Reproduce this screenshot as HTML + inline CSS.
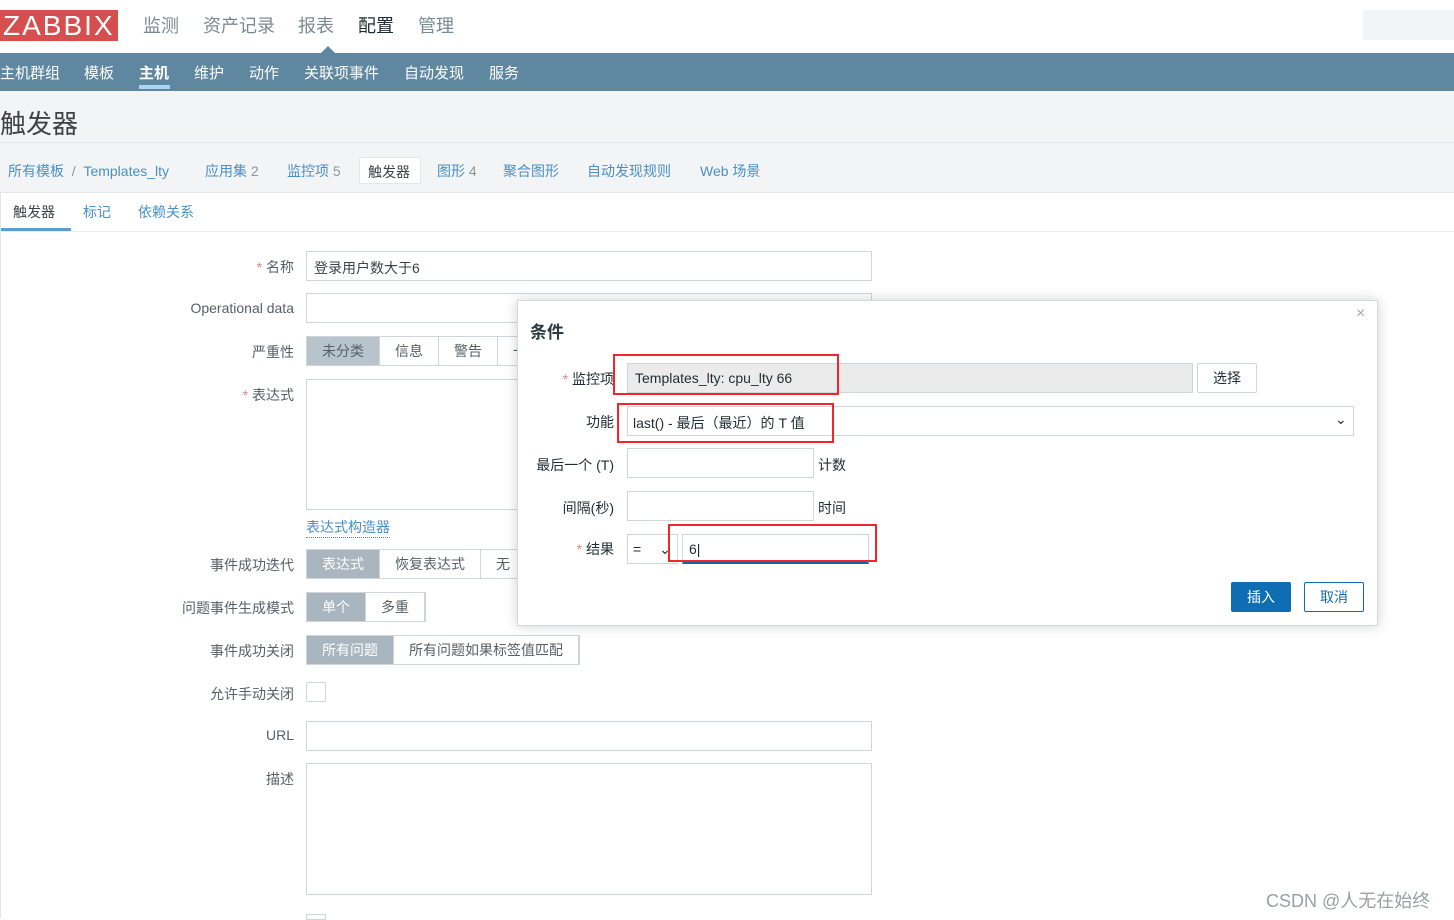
<!DOCTYPE html>
<html><head><meta charset="utf-8"><style>
*{box-sizing:border-box;margin:0;padding:0}
body{width:1454px;height:918px;overflow:hidden;background:#fff;font-family:"Liberation Sans","Noto Sans CJK SC",sans-serif;font-size:14px;color:#1f2c33;position:relative}
.a{position:absolute;white-space:nowrap}
.top{top:0;left:0;width:1454px;height:53px;background:#fff}
.logo{left:0;top:10px;width:118px;height:31px;background:#d64e4e;color:#fff;font-size:28px;line-height:31px;padding-left:3px;letter-spacing:2px}
.mm{top:12px;font-size:18px;color:#7a8a94}
.nav{top:53px;left:0;width:1454px;height:38px;background:#5f879f}
.sm{top:62px;font-size:15px;color:#fff}
.hd{top:91px;left:0;width:1454px;height:102px;background:#f3f4f6;border-bottom:1px solid #e4e7ea}
.lnk{color:#4a90c6;font-size:14px}
.lbl{font-size:14px;color:#576068;text-align:right;right:1160px}
.in{border:1px solid #cfd5d9;background:#fff}
.seg{border:1px solid #cfd5d9;height:30px;display:flex;font-size:14px;color:#576068}
.seg span{padding:0 15px;line-height:28px;border-right:1px solid #cfd5d9}
.seg span.on{background:#a9b6bf;color:#fff}
.st{color:#e8857a}
.red{border:2px solid #f0262a}
</style></head><body>
<div class="a top"></div>
<div class="a logo">ZABBIX</div>
<div class="a mm" style="left:143px">监测</div>
<div class="a mm" style="left:203px">资产记录</div>
<div class="a mm" style="left:298px">报表</div>
<div class="a mm" style="left:358px;color:#1f2c33">配置</div>
<div class="a mm" style="left:418px">管理</div>
<div class="a" style="left:1363px;top:10px;width:91px;height:30px;background:#f3f4f6"></div>
<div class="a nav"></div>
<div class="a" style="left:320px;top:46px;width:0;height:0;border-left:8px solid transparent;border-right:8px solid transparent;border-bottom:8px solid #5f879f"></div>
<div class="a sm" style="left:0">主机群组</div>
<div class="a sm" style="left:84px">模板</div>
<div class="a sm" style="left:139px;font-weight:bold">主机</div>
<div class="a" style="left:139px;top:85px;width:31px;height:4px;background:#a8d5f3"></div>
<div class="a sm" style="left:194px">维护</div>
<div class="a sm" style="left:249px">动作</div>
<div class="a sm" style="left:304px">关联项事件</div>
<div class="a sm" style="left:404px">自动发现</div>
<div class="a sm" style="left:489px">服务</div>
<div class="a hd"></div>
<div class="a" style="left:0;top:104px;font-size:26px;color:#3d4347">触发器</div>
<div class="a" style="left:0;top:142px;width:1454px;height:1px;background:#e4e7ea"></div>
<div class="a lnk" style="left:8px;top:161px">所有模板 <span style="color:#8896a0">&nbsp;/&nbsp;</span> Templates_lty</div>
<div class="a lnk" style="left:205px;top:161px">应用集 <span style="color:#8896a0">2</span></div>
<div class="a lnk" style="left:287px;top:161px">监控项 <span style="color:#8896a0">5</span></div>
<div class="a" style="left:359px;top:157px;width:62px;height:27px;background:#fff;border:1px solid #e4e7ea;border-radius:2px;padding:4px 8px;color:#3d4347">触发器</div>
<div class="a lnk" style="left:437px;top:161px">图形 <span style="color:#8896a0">4</span></div>
<div class="a lnk" style="left:503px;top:161px">聚合图形</div>
<div class="a lnk" style="left:587px;top:161px">自动发现规则</div>
<div class="a lnk" style="left:700px;top:161px">Web 场景</div>
<div class="a" style="left:0;top:193px;width:1454px;height:725px;background:#fff;border-left:1px solid #e4e7ea"></div>
<div class="a" style="left:13px;top:202px;color:#3d4347">触发器</div>
<div class="a lnk" style="left:83px;top:202px">标记</div>
<div class="a lnk" style="left:138px;top:202px">依赖关系</div>
<div class="a" style="left:1px;top:228px;width:70px;height:3px;background:#5b9fd0"></div>
<div class="a" style="left:0;top:231px;width:1454px;height:1px;background:#e9ecee"></div>

<div class="a lbl" style="top:257px"><span class="st">*</span> 名称</div>
<div class="a in" style="left:306px;top:251px;width:566px;height:30px;padding:6px 7px;color:#3d4347">登录用户数大于6</div>
<div class="a lbl" style="top:300px">Operational data</div>
<div class="a in" style="left:306px;top:293px;width:566px;height:30px"></div>
<div class="a lbl" style="top:342px">严重性</div>
<div class="a seg" style="left:306px;top:336px"><span class="on" style="background:#b8c4cb;color:#576068">未分类</span><span>信息</span><span>警告</span><span>一</span></div>
<div class="a lbl" style="top:385px"><span class="st">*</span> 表达式</div>
<div class="a in" style="left:306px;top:379px;width:566px;height:131px"></div>
<div class="a" style="left:306px;top:517px;color:#4a90c6;border-bottom:1px dotted #4a90c6">表达式构造器</div>
<div class="a lbl" style="top:555px">事件成功迭代</div>
<div class="a seg" style="left:306px;top:549px"><span class="on">表达式</span><span>恢复表达式</span><span>无</span></div>
<div class="a lbl" style="top:598px">问题事件生成模式</div>
<div class="a seg" style="left:306px;top:592px"><span class="on">单个</span><span>多重</span></div>
<div class="a lbl" style="top:641px">事件成功关闭</div>
<div class="a seg" style="left:306px;top:635px"><span class="on">所有问题</span><span>所有问题如果标签值匹配</span></div>
<div class="a lbl" style="top:684px">允许手动关闭</div>
<div class="a in" style="left:306px;top:682px;width:20px;height:20px;border-radius:2px"></div>
<div class="a lbl" style="top:727px">URL</div>
<div class="a in" style="left:306px;top:721px;width:566px;height:30px"></div>
<div class="a lbl" style="top:769px">描述</div>
<div class="a in" style="left:306px;top:763px;width:566px;height:132px"></div>
<div class="a" style="left:306px;top:914px;width:20px;height:6px;border:1px solid #cfd5d9"></div>
<div class="a" style="left:1266px;top:887px;font-size:18px;color:#9aa0a4">CSDN @人无在始终</div>

<!-- dialog -->
<div class="a" style="left:517px;top:300px;width:861px;height:326px;background:#fff;border:1px solid #d4d9dc;box-shadow:0 0 12px rgba(0,0,0,.18)"></div>
<div class="a" style="left:1356px;top:305px;font-size:16px;color:#a0a8ad">×</div>
<div class="a" style="left:530px;top:318px;font-size:17px;font-weight:bold;color:#2d3a40">条件</div>
<div class="a" style="right:840px;top:369px;color:#1f2c33"><span class="st">*</span> 监控项</div>
<div class="a" style="left:627px;top:363px;width:566px;height:30px;background:#ebebeb;border:1px solid #cfd5d9;padding:6px 7px">Templates_lty: cpu_lty 66</div>
<div class="a red" style="left:613px;top:354px;width:226px;height:41px"></div>
<div class="a" style="left:1197px;top:363px;width:60px;height:30px;border:1px solid #cfd5d9;border-radius:2px;text-align:center;line-height:28px">选择</div>
<div class="a" style="right:840px;top:412px">功能</div>
<div class="a in" style="left:627px;top:406px;width:727px;height:30px;padding:6px 5px">last() - 最后（最近）的 T 值</div>
<div class="a" style="left:1335px;top:411px;font-size:14px">⌄</div>
<div class="a red" style="left:617px;top:403px;width:217px;height:40px"></div>
<div class="a" style="right:840px;top:455px">最后一个 (T)</div>
<div class="a in" style="left:627px;top:448px;width:187px;height:30px"></div>
<div class="a" style="left:818px;top:455px">计数</div>
<div class="a" style="right:840px;top:498px">间隔(秒)</div>
<div class="a in" style="left:627px;top:491px;width:187px;height:30px"></div>
<div class="a" style="left:818px;top:498px">时间</div>
<div class="a" style="right:840px;top:539px"><span class="st">*</span> 结果</div>
<div class="a in" style="left:627px;top:534px;width:51px;height:30px;padding:6px 5px">= <span style="margin-left:14px">⌄</span></div>
<div class="a" style="left:682px;top:534px;width:187px;height:30px;border:1px solid #cfd5d9;border-bottom:2px solid #0f67a9;padding:6px 6px">6|</div>
<div class="a red" style="left:668px;top:524px;width:209px;height:38px"></div>
<div class="a" style="left:1231px;top:582px;width:60px;height:30px;background:#0f6db4;border-radius:2px;color:#fff;text-align:center;line-height:30px">插入</div>
<div class="a" style="left:1304px;top:582px;width:60px;height:30px;border:1px solid #0f6db4;border-radius:2px;color:#0f6db4;text-align:center;line-height:28px">取消</div>
</body></html>
